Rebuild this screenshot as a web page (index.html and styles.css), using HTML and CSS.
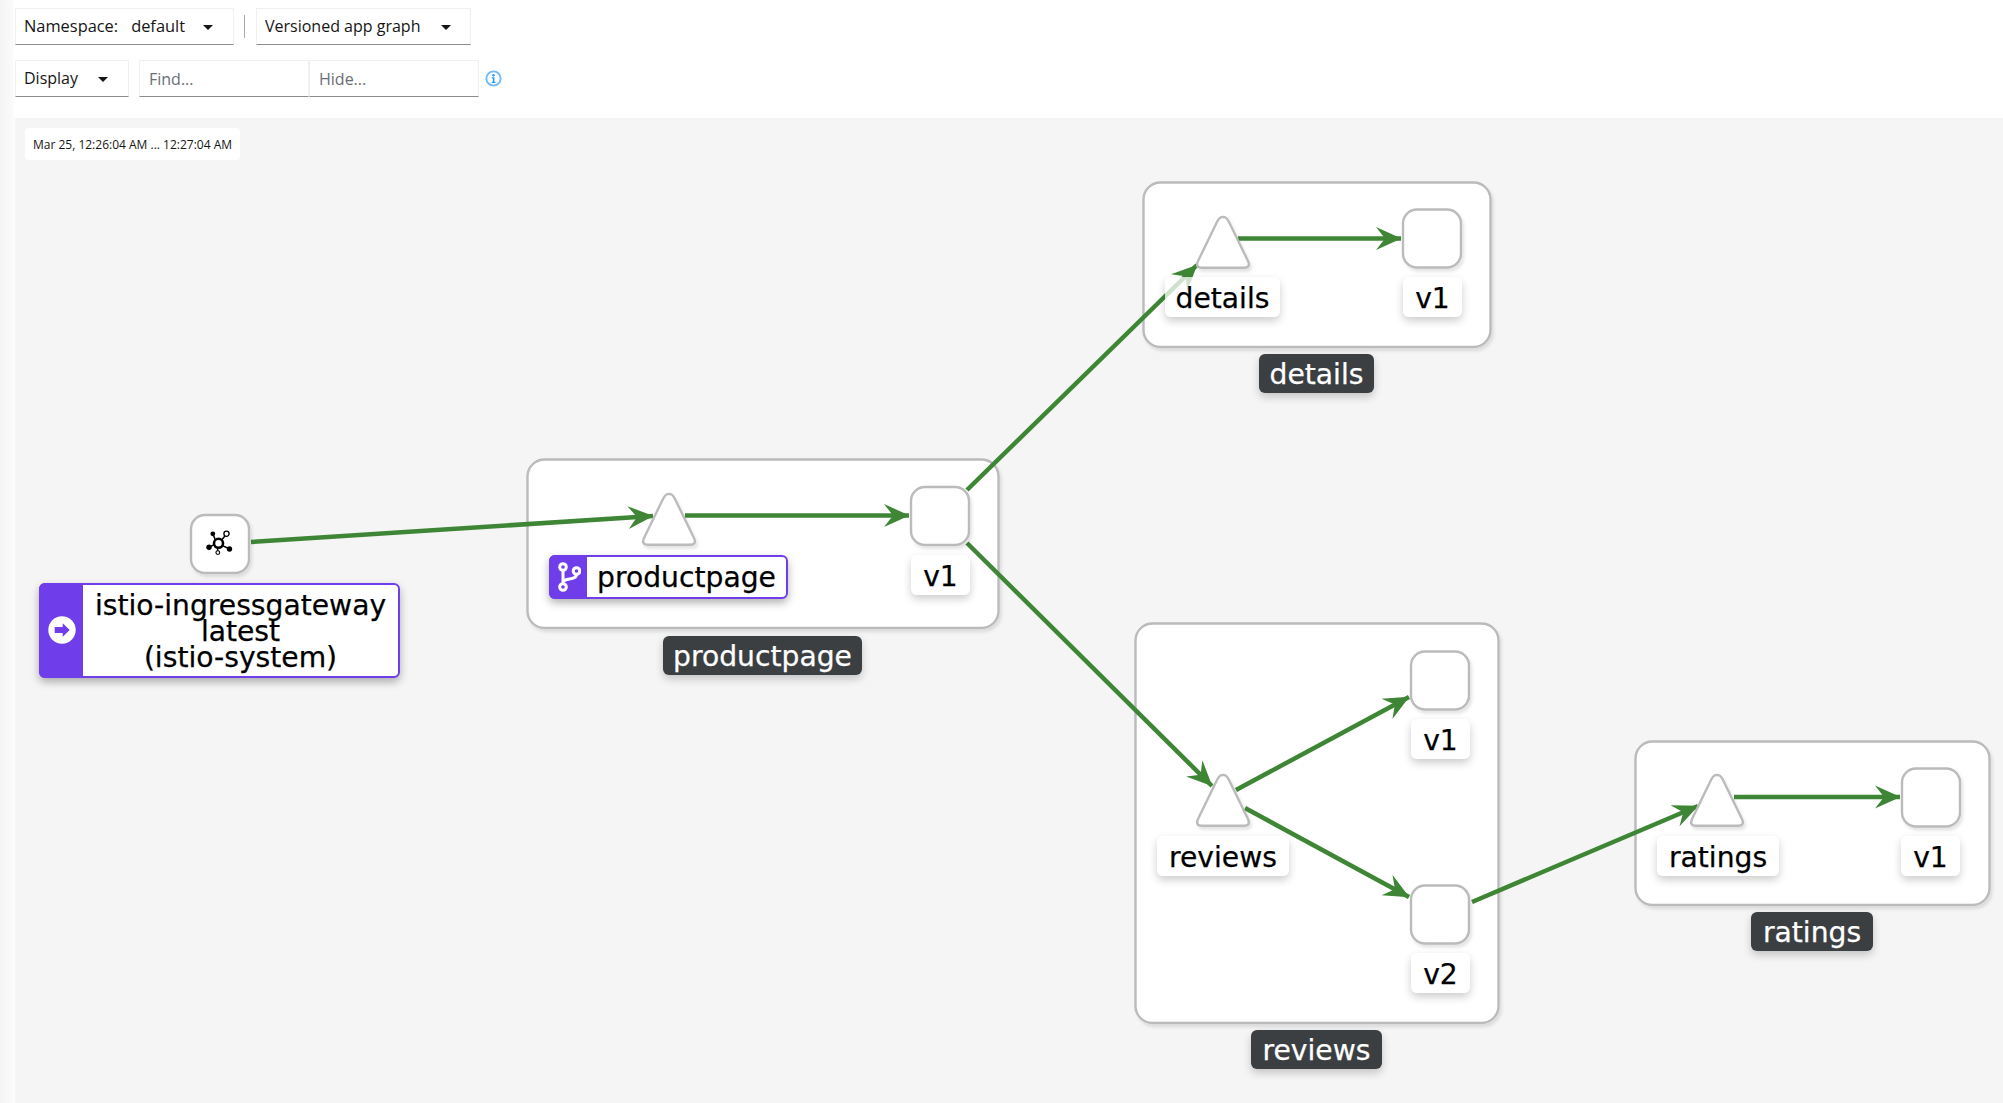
FILE: index.html
```html
<!DOCTYPE html>
<html lang="en">
<head>
<meta charset="utf-8">
<title>Versioned app graph</title>
<link rel="stylesheet" href="styles.css">
</head>
<body>
<div class="page">
  <header class="toolbar">
    <div class="row row-top">
      <div class="select select-ns"><span>Namespace:</span><span class="ns-value">default</span><i class="caret"></i></div>
      <div class="sep"></div>
      <div class="select select-graph"><span>Versioned app graph</span><i class="caret"></i></div>
    </div>
    <div class="row row-bottom">
      <div class="select select-display"><span>Display</span><i class="caret"></i></div>
      <div class="inputs">
        <div class="field field-find">Find...</div>
        <div class="field field-hide">Hide...</div>
      </div>
      <svg class="info" viewBox="0 0 16 16" width="17" height="17"><circle cx="8" cy="8" r="6.700" fill="#fff" stroke="#73bcf7" stroke-width="1.800"/><circle cx="8" cy="4.900" r="1.200" fill="#2b9af3"/><path d="M6.400 6.900h2.500v4.100h1v1.300H6.300v-1.300h1.100V8.100h-1z" fill="#2b9af3"/></svg>
    </div>
  </header>
  <main class="graph">
    <div class="time">Mar 25, 12:26:04 AM ... 12:27:04 AM</div>

    <svg class="canvas" width="1988" height="985" viewBox="15 118 1988 985">
      <defs>
        <filter id="soft" x="-10%" y="-10%" width="125%" height="125%"><feDropShadow dx="2" dy="3" stdDeviation="1.500" flood-color="#000" flood-opacity=".1"/></filter>
        <marker id="arrow" viewBox="0 0 26 24" refX="25" refY="12" markerWidth="26" markerHeight="24" markerUnits="userSpaceOnUse" orient="auto"><path d="M0 .5 L25.500 12 L0 23.500 L9 12 Z" fill="#3e8635"/></marker>
      </defs>
      <g class="box" filter="url(#soft)">
        <rect x="1143.500" y="182.500" width="347" height="164.500" rx="17"/>
        <rect x="527.500" y="459.500" width="471" height="168.500" rx="17"/>
        <rect x="1135.500" y="623.500" width="363" height="399.500" rx="17"/>
        <rect x="1635.500" y="741.500" width="354" height="163.500" rx="17"/>
      </g>
      <g class="edges">
        <line x1="251" y1="542" x2="653" y2="516"/>
        <line x1="685" y1="515.500" x2="909" y2="515.500"/>
        <line x1="1238" y1="238.500" x2="1401" y2="238.500"/>
        <line x1="1236" y1="790" x2="1409" y2="697"/>
        <line x1="1245" y1="808" x2="1409" y2="897"/>
        <line x1="1734" y1="797" x2="1900" y2="797"/>
        <line x1="967" y1="490" x2="1197" y2="265"/>
        <line x1="967" y1="543" x2="1212" y2="786"/>
        <line x1="1472" y1="902" x2="1698" y2="806"/>
      </g>
      <g class="shape" filter="url(#soft)">
        <rect x="191" y="515" width="58" height="58" rx="14"/>
        <rect x="911" y="487" width="58" height="58" rx="14"/>
        <rect x="1403" y="209.500" width="58" height="58" rx="14"/>
        <rect x="1411" y="651.500" width="58" height="58" rx="14"/>
        <rect x="1411" y="885.500" width="58" height="58" rx="14"/>
        <rect x="1902" y="768.500" width="58" height="58" rx="14"/>
        <path id="tri" d="M663 499 C665.500 494 667 494 669 494 C671 494 672.500 494 675 499 L693.500 537 Q697.500 544.700 690 544.700 L648 544.700 Q640.500 544.700 644.500 537 Z"/>
        <use href="#tri" x="554" y="-277"/>
        <use href="#tri" x="554" y="281"/>
        <use href="#tri" x="1048" y="281"/>
      </g>
      <g class="cluster-icon" transform="translate(218.500 543.300)">
        <path d="M3 -3 L7 -8 M-3 -3 L-5.700 -9.500 M-4 1 L-9.500 4 M3.500 2 L11 5.700 M-1 4 L-.7 8" stroke="#000" stroke-width="1.500"/>
        <circle cx="0" cy="0" r="4.500" fill="#fff" stroke="#000" stroke-width="2.600"/>
        <circle cx="8" cy="-9.500" r="2.600" fill="#fff" stroke="#000" stroke-width="1.300"/>
        <circle cx="-5.700" cy="-9.500" r="2.400" fill="#000"/>
        <circle cx="-9.500" cy="4" r="2.700" fill="#000"/>
        <circle cx="11" cy="5.700" r="2.700" fill="#000"/>
        <circle cx="-.7" cy="9.300" r="1.900" fill="#fff" stroke="#000" stroke-width="1.100"/>
      </g>
    </svg>

    <div class="badge badge-gw">
      <div class="badge-tag badge-tag-gw">
        <svg viewBox="0 0 28 28" width="28" height="28"><circle cx="14" cy="14" r="13.700" fill="#fff"/><path d="M14.700 7.300 L21.700 14 L14.700 20.700 V17 H6.700 V11 H14.700 Z" fill="#6f3eea"/></svg>
      </div>
      <div class="badge-text badge-text-gw">istio-ingressgateway<br>latest<br>(istio-system)</div>
    </div>

    <div class="badge badge-pp">
      <div class="badge-tag badge-tag-pp">
        <svg viewBox="0 0 24 30" width="24" height="30"><g fill="none" stroke="#fff" stroke-width="3"><circle cx="6" cy="5" r="3.300"/><circle cx="19.500" cy="9" r="3.300"/><circle cx="6" cy="25" r="3.300"/><path d="M6 8.500 V21.500 M19.500 12.500 C19.500 19 6 15 6 21"/></g></svg>
      </div>
      <div class="badge-text">productpage</div>
    </div>

    <div class="label lbl-details">details</div>
    <div class="label lbl-details-v1 vlabel">v1</div>
    <div class="label lbl-pp-v1 vlabel">v1</div>
    <div class="label lbl-reviews">reviews</div>
    <div class="label lbl-rev-v1 vlabel">v1</div>
    <div class="label lbl-rev-v2 vlabel">v2</div>
    <div class="label lbl-ratings">ratings</div>
    <div class="label lbl-rat-v1 vlabel">v1</div>

    <div class="dark lbl-d-details">details</div>
    <div class="dark lbl-d-pp">productpage</div>
    <div class="dark lbl-d-reviews">reviews</div>
    <div class="dark lbl-d-ratings">ratings</div>
  </main>
</div>
</body>
</html>
```
FILE: styles.css
```css
* { box-sizing: border-box; }
html, body { margin: 0; height: 100%; background: #fff; overflow: hidden; }
.page { width: 2003px; height: 1103px; padding-left: 15px; display: flex; flex-direction: column; font-family: "Open Sans", "Noto Sans", sans-serif; color: #151515; font-size: 16px; position: relative; background: linear-gradient(90deg, #f4f4f4 0, #fafafa 12px, #fff 15px); }
.toolbar { height: 118px; padding-top: 8px; background: #fff; display: flex; flex-direction: column; gap: 15px; }
.row { display: flex; align-items: center; height: 37px; }
.select { height: 37px; display: flex; align-items: center; padding: 0 8px 2px; background: #fff; border: 1px solid #f0f0f0; border-bottom: 1px solid #8a8d90; position: relative; white-space: nowrap; }
.select-ns { width: 219px; font-size: 16.400px; }
.ns-value { margin-left: 13px; }
.select-graph { width: 215px; }
.select-display { width: 114px; }
.caret { position: absolute; right: 20px; top: 16px; width: 0; height: 0; border-left: 5.500px solid transparent; border-right: 5.500px solid transparent; border-top: 5.500px solid #151515; }
.select-graph .caret { right: 19px; }
.sep { width: 1px; height: 23px; background: #aaa; margin: 0 11px 0 10px; }
.inputs { display: flex; margin-left: 10px; }
.field { height: 37px; width: 170px; padding: 0 9px; display: flex; align-items: center; color: #6a6e73; border: 1px solid #f0f0f0; border-bottom: 1px solid #8a8d90; }
.info { margin-left: 6px; }
.graph { flex: 1; position: relative; background: #f5f5f5; overflow: hidden; }
.time { position: absolute; left: 10px; top: 10px; height: 32px; width: 215px; background: #fff; border-radius: 4px; font-size: 12px; display: flex; align-items: center; justify-content: center; white-space: nowrap; color: #151515; }
.canvas { position: absolute; left: 0; top: 0; display: block; }
.box rect { fill: #fff; stroke: #bbb; stroke-width: 2.400; }
.shape rect, .shape path { fill: #fff; stroke: #bbb; stroke-width: 2.400; }
.edges line { stroke: #3e8635; stroke-width: 4.500; marker-end: url(#arrow); }
.label, .badge-text, .dark { font-family: "DejaVu Sans", sans-serif; font-size: 28.200px; white-space: nowrap; -webkit-text-stroke: .25px currentColor; }
.label { position: absolute; height: 40px; padding-top: 2px; background: rgba(255, 255, 255, .75); border-radius: 6px; box-shadow: 0 4px 8px rgba(0, 0, 0, .2); color: #000; display: flex; align-items: center; justify-content: center; }
.dark { position: absolute; height: 39px; padding-top: 2px; background: #3c3f42; color: #fff; border-radius: 6px; box-shadow: 0 4px 8px rgba(0, 0, 0, .2); display: flex; align-items: center; justify-content: center; }
.badge { position: absolute; display: flex; border: 2px solid #6f3eea; border-radius: 6px; background: #fff; box-shadow: 0 4px 8px rgba(0, 0, 0, .3); color: #000; }
.badge-tag { background: #6f3eea; display: flex; align-items: center; justify-content: center; margin: -2px 0 -2px -2px; border-radius: 6px 0 0 6px; }
.badge-gw { left: 24px; top: 465px; width: 361px; height: 95px; }
.badge-tag-gw { width: 44px; padding: 0 0 2px 2px; }
.badge-text-gw { flex: 1; text-align: center; line-height: 26px; padding-top: 8px; }
.badge-pp { left: 534px; top: 437px; width: 239px; height: 44px; }
.badge-tag-pp { width: 38px; padding-left: 2px; }
.badge-pp .badge-text { flex: 1; display: flex; align-items: center; justify-content: center; }
.lbl-details { left: 1150px; top: 159px; width: 115px; }
.vlabel { width: 59px; }
.lbl-details-v1 { left: 1388px; top: 159px; }
.lbl-pp-v1 { left: 896px; top: 437px; }
.lbl-reviews { left: 1142px; top: 718px; width: 132px; }
.lbl-rev-v1 { left: 1396px; top: 601px; }
.lbl-rev-v2 { left: 1396px; top: 835px; }
.lbl-ratings { left: 1642px; top: 718px; width: 122px; }
.lbl-rat-v1 { left: 1886px; top: 718px; }
.lbl-d-details { left: 1244px; top: 236px; width: 115px; }
.lbl-d-pp { left: 648px; top: 518px; width: 199px; }
.lbl-d-reviews { left: 1236px; top: 912px; width: 131px; }
.lbl-d-ratings { left: 1736px; top: 794px; width: 122px; }
```
